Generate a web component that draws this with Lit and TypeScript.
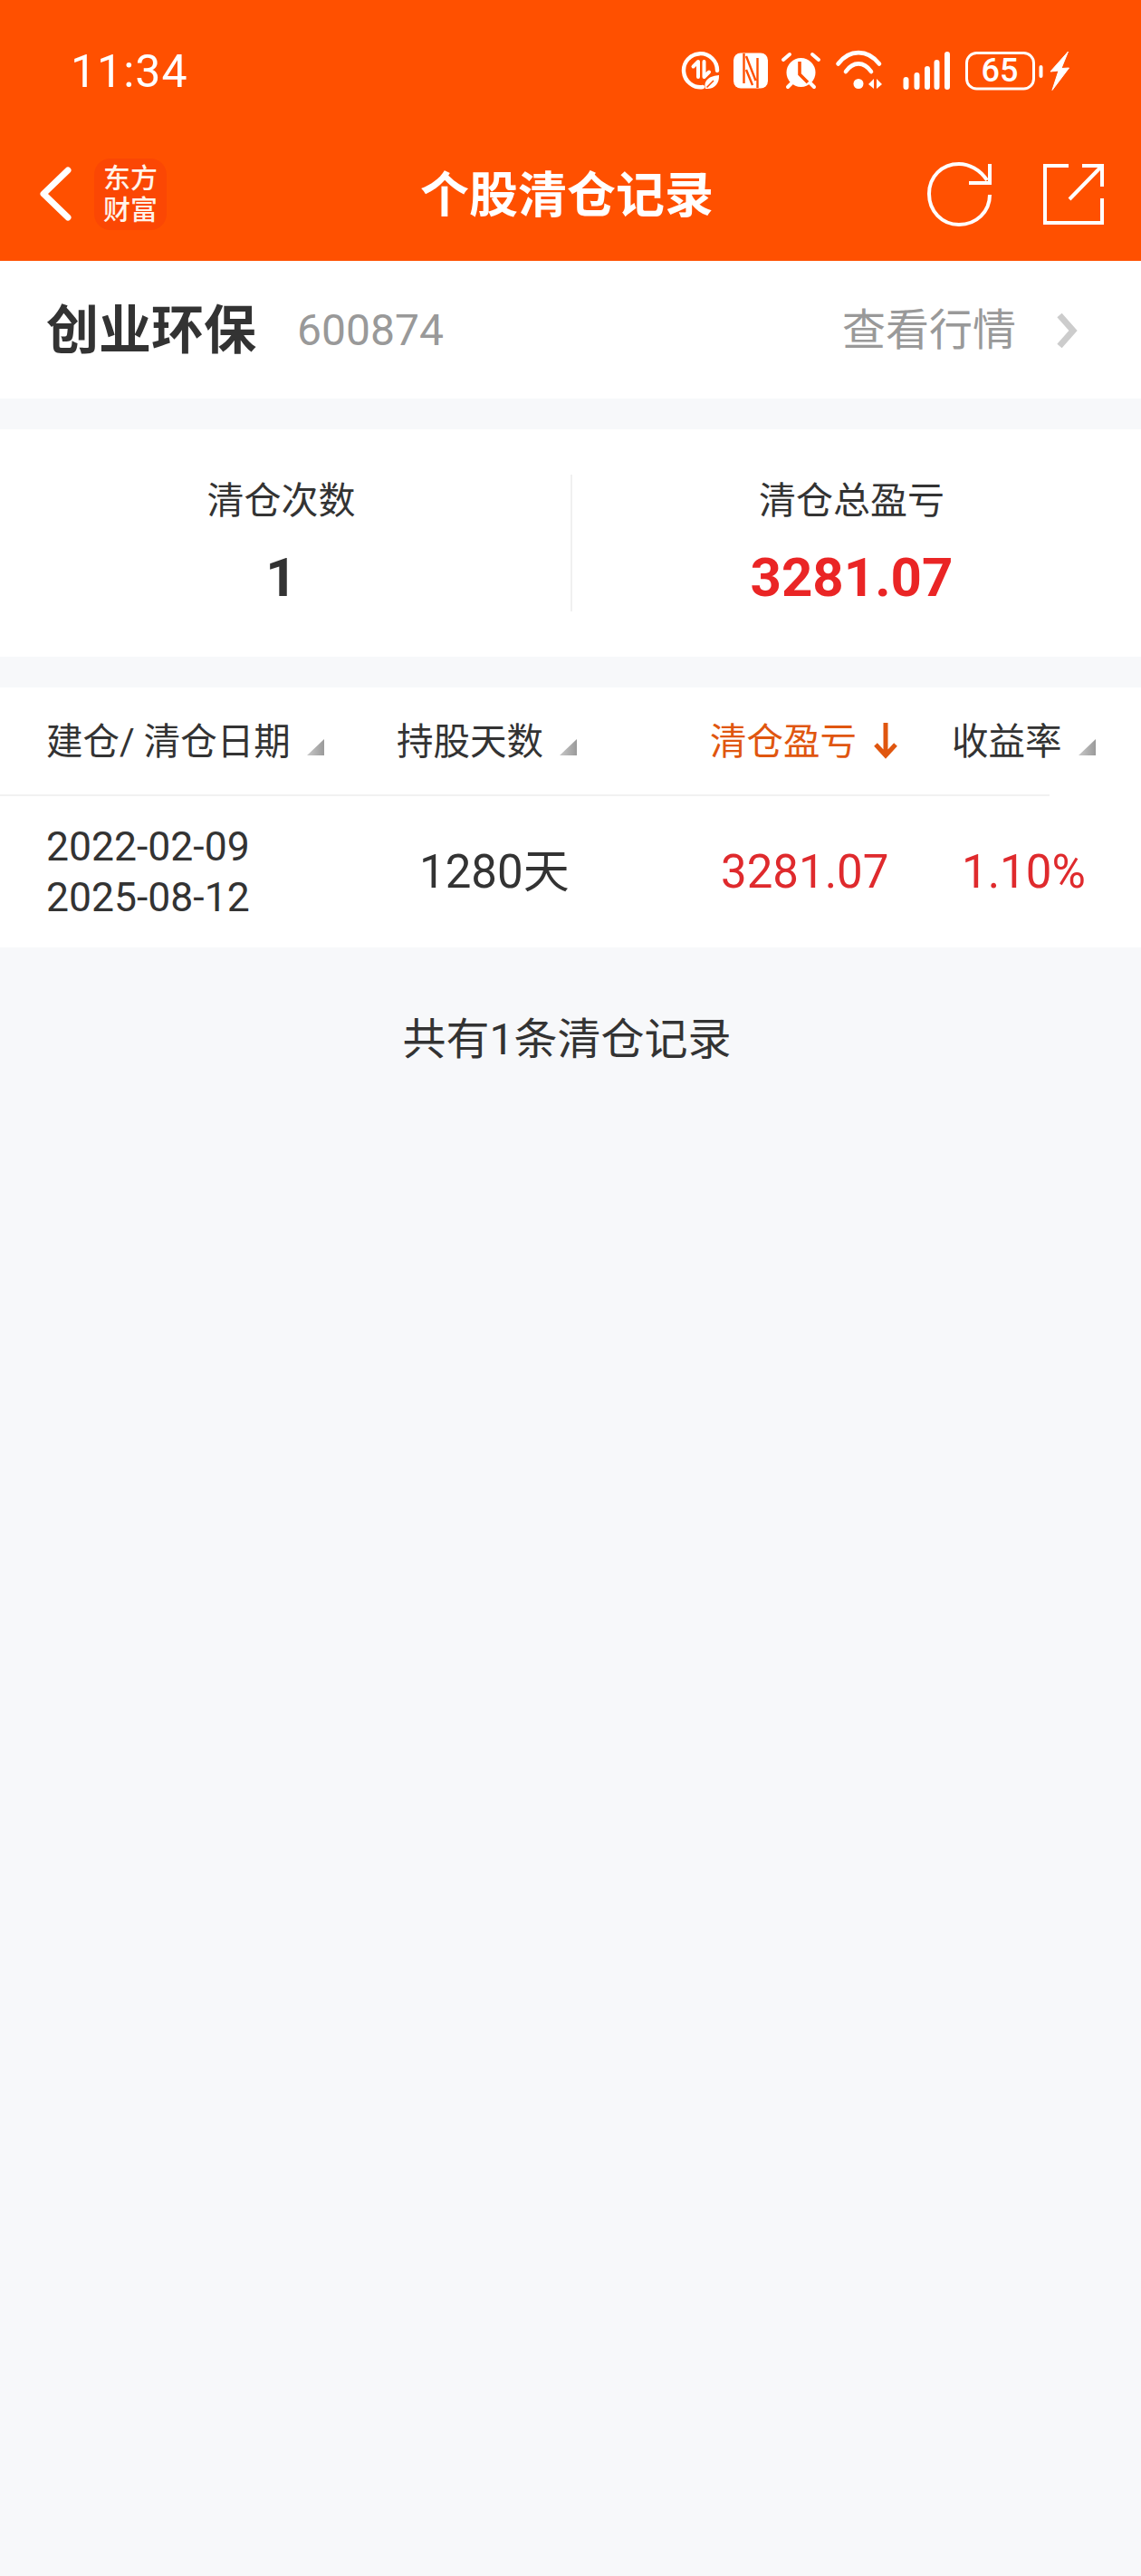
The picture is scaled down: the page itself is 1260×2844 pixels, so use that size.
import { LitElement, html, css, svg } from "lit";
import { customElement } from "lit/decorators.js";

const tri = html`<svg class="tri" viewBox="0 0 19 18"><defs><linearGradient id="g" x1="0" x2="1"><stop offset="0" stop-color="#c8c8c8"/><stop offset="1" stop-color="#9a9a9a"/></linearGradient></defs><polygon points="19,0 0,18 19,18" fill="url(#g)"/></svg>`;

const statusIcons = svg`
  <g fill="none" stroke="#fff" stroke-width="4" stroke-linecap="round" stroke-linejoin="round">
    <path d="M775 96 A18.5 18.5 0 1 1 791 78" stroke-width="4.4"/>
    <path d="M764.5 73.5 L770 68 V85" stroke-width="4"/>
    <path d="M776.5 68 V85 L782 79.5" stroke-width="4"/>
    <path d="M864 66 L871 60 M896 60 L903 66 M869 96 L873 92 M898 96 L894 92" stroke-width="4"/>
    <path d="M924.5 70.5 C937 54 957 54 970 70.5" stroke-width="4.6"/>
    <path d="M933 79 C941 67.5 953 67.5 961 79" stroke-width="4.6"/>
    <path d="M999.5 88 V96 M1011.5 83 V96 M1023 76 V96 M1033.5 69 V96 M1045 60 V96" stroke-width="6"/>
    <rect x="1066.5" y="58.5" width="74" height="39.5" rx="11" stroke-width="3"/>
    <path d="M1148.5 74 V84" stroke-width="4"/>
  </g>
  <path d="M778 98 C775 88 784 83.5 793 83 C793.5 92 788 99 778 98Z" fill="#fff"/>
  <path d="M779.5 96.5 L787 89" stroke="#ff5000" stroke-width="1.6" fill="none"/>
  <rect x="809" y="58.5" width="38" height="39" rx="8" fill="#fff"/>
  <path d="M820.5 59 V92 M835.5 64 V97 M823 62 L833.5 89 M823 77 L830 94" stroke="#ff5000" stroke-width="2.4" fill="none"/>
  <circle cx="883.5" cy="80" r="16" fill="#fff"/>
  <path d="M882 68 V82 L891 91" stroke="#ff5000" stroke-width="3.6" fill="none"/>
  <circle cx="947" cy="92.5" r="5.5" fill="#fff"/>
  <polygon points="958,93 964,87 964,98" fill="#fff"/>
  <polygon points="967,87 973,93 967,98" fill="#fff"/>
  <text class="batt" x="1103" y="90" text-anchor="middle">65</text>
  <polygon points="1178.5,57 1159,79 1168,78 1161,99.5 1179.5,75 1171,75.5" fill="#fff" stroke="#fff" stroke-width="1" stroke-linejoin="round"/>
`;

@customElement("app-root")
export class AppRoot extends LitElement {
  static styles = css`
    :host {
      display: block;
      width: 1260px;
      height: 2844px;
      background: #f7f8fa;
      color: #333;
      font-family: Roboto, "Noto Sans CJK SC", sans-serif;
      overflow: hidden;
    }
    .top { background: #ff5000; color: #fff; }
    .status {
      height: 124px;
      padding: 16px 79px 0 78px;
      display: flex;
      align-items: center;
      justify-content: space-between;
    }
    .time { font-size: 50px; line-height: 60px; letter-spacing: 1px; padding-top: 2px; }
    .status-icons { width: 430px; height: 46px; display: block; }
    .batt { font: 500 36px Roboto, sans-serif; fill: #fff; }
    .nav {
      height: 148px;
      position: relative;
      display: flex;
      align-items: center;
      justify-content: space-between;
      padding: 0 39px 0 41px;
    }
    .nav-left, .nav-right { display: flex; align-items: center; }
    .nav-left { gap: 24px; }
    .nav-right { gap: 54px; }
    .back { width: 39px; height: 62px; display: block; }
    .logo {
      width: 80px;
      height: 79px;
      border-radius: 18px;
      background: #fb4704;
      display: flex;
      flex-direction: column;
      align-items: center;
      justify-content: center;
      font-size: 30px;
      line-height: 35px;
      font-weight: 500;
      color: #fff3ea;
    }
    .title {
      position: absolute;
      left: 0;
      right: 8px;
      top: 42px;
      text-align: center;
      font-size: 54px;
      font-weight: 700;
      line-height: 70px;
    }
    .ic { display: block; }
    .refresh { width: 74px; height: 74px; }
    .share { width: 71px; height: 71px; }

    .stock {
      height: 152px;
      background: #fff;
      display: flex;
      align-items: center;
      padding: 2px 68px 0 51px;
      box-sizing: border-box;
    }
    .name { font-size: 58px; font-weight: 700; line-height: 76px; }
    .code { font-size: 48px; color: #999; margin-left: 45px; line-height: 60px; }
    .more { margin-left: auto; font-size: 48px; color: #999; line-height: 60px; }
    .chev { width: 28px; height: 42px; margin-left: 42px; display: block; }

    .stats {
      margin-top: 34px;
      height: 251px;
      background: #fff;
      display: flex;
      align-items: center;
    }
    .stat {
      width: 630px;
      height: 151px;
      box-sizing: border-box;
      text-align: center;
      padding-right: 9px;
    }
    .stat + .stat { border-left: 2px solid #f0f0f0; padding-right: 11px; }
    .stat-label { font-size: 41px; line-height: 56px; padding-top: 1px; }
    .stat-value { font-size: 60px; font-weight: 700; line-height: 70px; margin-top: 22px; }
    .red-strong { color: #ea2525; }

    .table { margin-top: 34px; background: #fff; }
    .head {
      height: 118px;
      display: grid;
      grid-template-columns: 387px 346px 267px 1fr;
      padding-left: 51px;
      align-items: center;
      position: relative;
      font-size: 40.5px;
    }
    .head::after {
      content: "";
      position: absolute;
      left: 0;
      bottom: -2px;
      width: 1159px;
      height: 2px;
      background: #f1f1f1;
    }
    .h { display: flex; align-items: center; line-height: 56px; white-space: pre; padding-top: 2px; }
    .tri { width: 19px; height: 18px; margin: 12px 0 0 18px; display: block; }
    .active { color: #e0560f; }
    .arrow { width: 32px; height: 44px; margin: -4px 0 0 16px; display: block; }
    .row {
      margin-top: 2px;
      height: 167px;
      display: grid;
      grid-template-columns: 387px 346px 267px 1fr;
      padding-left: 51px;
      align-items: center;
      font-size: 51px;
      line-height: 60px;
    }
    .date { font-size: 44.5px; line-height: 56px; }
    .days { padding-left: 25px; }
    .profit { padding-left: 12px; color: #df2a2d; }
    .rate { padding-left: 11px; color: #df2a2d; }
    .foot { text-align: center; font-size: 48px; line-height: 64px; margin-top: 70px; padding-right: 8px; }
  `;

  render() {
    return html`
      <div class="top">
        <div class="status">
          <div class="time">11:34</div>
          <svg class="status-icons" viewBox="750 55 430 46">${statusIcons}</svg>
        </div>
        <div class="nav">
          <div class="nav-left">
            <svg class="back" viewBox="0 0 39 62"><path d="M34 5 L7 31 L34 57" fill="none" stroke="#fff" stroke-width="7" stroke-linecap="round" stroke-linejoin="round"/></svg>
            <div class="logo"><span>东方</span><span>财富</span></div>
          </div>
          <div class="title">个股清仓记录</div>
          <div class="nav-right">
            <svg class="ic refresh" viewBox="1023 176 74 74"><path d="M1094 214 C1094 233 1079 247 1060 247 C1041 247 1027 232 1027 213 C1027 194 1041 180 1060 180 C1071 180 1083 186 1091 198" fill="none" stroke="#fff" stroke-width="4"/><path d="M1071 201 H1094 V180" fill="none" stroke="#fff" stroke-width="4"/></svg>
            <svg class="ic share" viewBox="1150 178 71 71"><path d="M1180 182 H1154 V245 H1217 V218" fill="none" stroke="#fff" stroke-width="4"/><path d="M1181 219 L1217 182 M1195 182 H1217 V205" fill="none" stroke="#fff" stroke-width="4"/></svg>
          </div>
        </div>
      </div>

      <div class="stock">
        <div class="name">创业环保</div>
        <div class="code">600874</div>
        <div class="more">查看行情</div>
        <svg class="chev" viewBox="0 0 28 42"><path d="M6 4 L21 21 L6 38" fill="none" stroke="#ccc" stroke-width="7"/></svg>
      </div>

      <div class="stats">
        <div class="stat">
          <div class="stat-label">清仓次数</div>
          <div class="stat-value">1</div>
        </div>
        <div class="stat">
          <div class="stat-label">清仓总盈亏</div>
          <div class="stat-value red-strong">3281.07</div>
        </div>
      </div>

      <div class="table">
        <div class="head">
          <div class="h">建仓/ 清仓日期${tri}</div>
          <div class="h">持股天数${tri}</div>
          <div class="h active">清仓盈亏<svg class="arrow" viewBox="0 0 32 44"><path d="M16 3 V39 M5 27 L16 39 L27 27" fill="none" stroke="#e0560f" stroke-width="5"/></svg></div>
          <div class="h">收益率${tri}</div>
        </div>
        <div class="row">
          <div class="date">2022-02-09<br />2025-08-12</div>
          <div class="days">1280天</div>
          <div class="profit">3281.07</div>
          <div class="rate">1.10%</div>
        </div>
      </div>

      <div class="foot">共有1条清仓记录</div>
    `;
  }
}
